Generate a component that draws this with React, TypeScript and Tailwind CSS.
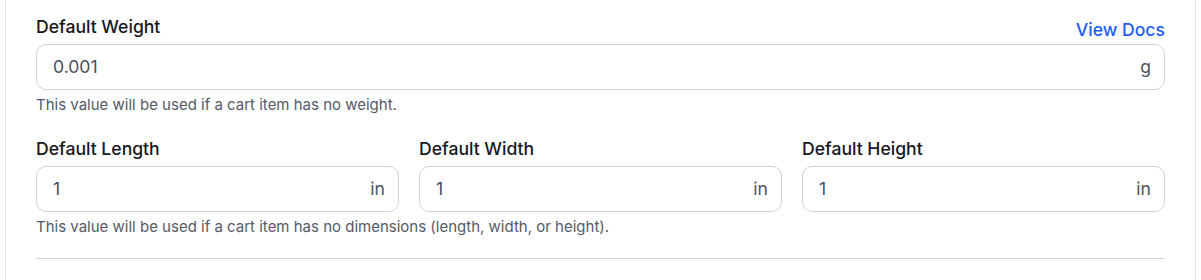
import React from 'react';

interface UnitInputProps {
  value: string;
  unit: string;
}

const UnitInput = ({ value, unit }: UnitInputProps) => {
  return (
    <div className="flex h-[46px] items-center justify-between rounded-[10px] border border-[#cfd2dc] bg-white pl-4 pr-[13px]">
      <input
        readOnly
        value={value}
        className="w-full bg-transparent text-[17.6px] text-[#4a4f5c] outline-none"
      />
      <span className="text-[17.6px] text-[#4e5463]">{unit}</span>
    </div>
  );
};

const App = () => {
  return (
    <div className="min-h-screen bg-white font-['Inter',sans-serif]">
      <div className="mx-[5px] h-[280px] border-x border-[#e4e5ea] px-[30px] pt-[15px]">
        {/* Weight */}
        <div className="flex items-end justify-between">
          <label className="text-[17.6px] font-medium leading-6 text-[#16181d]">Default Weight</label>
          <a href="#" className="text-[17.6px] font-medium leading-[18px] text-[#1d5cf5]">
            View Docs
          </a>
        </div>
        <div className="mt-[5px]">
          <UnitInput value="0.001" unit="g" />
        </div>
        <p className="mt-1.5 text-[15px] leading-[18px] text-[#555a66]">
          This value will be used if a cart item has no weight.
        </p>

        {/* Dimensions */}
        <div className="mt-[23px] grid grid-cols-3 gap-5">
          {[
            { label: 'Default Length', value: '1' },
            { label: 'Default Width', value: '1' },
            { label: 'Default Height', value: '1' },
          ].map((f) => (
            <div key={f.label}>
              <label className="block text-[17.6px] font-medium leading-6 text-[#16181d]">{f.label}</label>
              <div className="mt-[5px]">
                <UnitInput value={f.value} unit="in" />
              </div>
            </div>
          ))}
        </div>
        <p className="mt-1.5 text-[15px] leading-[18px] text-[#555a66]">
          This value will be used if a cart item has no dimensions (length, width, or height).
        </p>

        <div className="mt-[22px] border-t border-[#d3d5de]" />
      </div>
    </div>
  );
};

export default App;
